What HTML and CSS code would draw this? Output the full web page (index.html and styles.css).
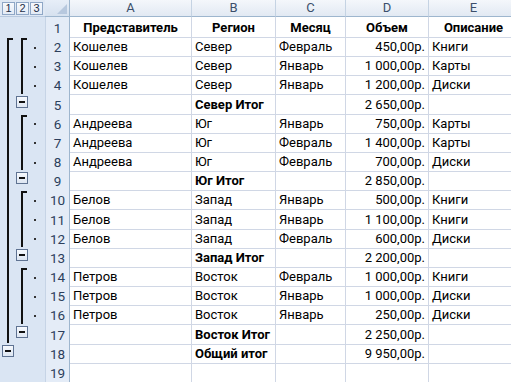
FILE: index.html
```html
<!DOCTYPE html>
<html lang="ru">
<head>
<meta charset="utf-8">
<title>Итоги</title>
<link rel="stylesheet" href="styles.css">
</head>
<body>
<div class="sheet">
  <div class="row head">
    <div class="lv-area"><span class="lv">1</span><span class="lv">2</span><span class="lv">3</span></div>
    <div class="corner"></div>
    <div class="ch">A</div><div class="ch">B</div><div class="ch">C</div><div class="ch">D</div><div class="ch">E</div>
  </div>

  <div class="row"><div class="o"></div><div class="o"></div><div class="o"></div><div class="rh">1</div>
    <div class="c b ctr">Представитель</div><div class="c b ctr">Регион</div><div class="c b ctr">Месяц</div><div class="c b ctr">Объем</div><div class="c b ctr">Описание</div></div>

  <div class="row"><div class="o o1 start"><i></i></div><div class="o o2 start"><i></i></div><div class="o dot"><i></i></div><div class="rh">2</div>
    <div class="c">Кошелев</div><div class="c">Север</div><div class="c">Февраль</div><div class="c num">450,00р.</div><div class="c">Книги</div></div>
  <div class="row"><div class="o o1 bar"><i></i></div><div class="o o2 bar"><i></i></div><div class="o dot"><i></i></div><div class="rh">3</div>
    <div class="c">Кошелев</div><div class="c">Север</div><div class="c">Январь</div><div class="c num">1 000,00р.</div><div class="c">Карты</div></div>
  <div class="row"><div class="o o1 bar"><i></i></div><div class="o o2 bar"><i></i></div><div class="o dot"><i></i></div><div class="rh">4</div>
    <div class="c">Кошелев</div><div class="c">Север</div><div class="c">Январь</div><div class="c num">1 200,00р.</div><div class="c">Диски</div></div>
  <div class="row"><div class="o o1 bar"><i></i></div><div class="o o2 btn"><i></i></div><div class="o"></div><div class="rh">5</div>
    <div class="c"></div><div class="c b">Север Итог</div><div class="c"></div><div class="c num">2 650,00р.</div><div class="c"></div></div>

  <div class="row"><div class="o o1 bar"><i></i></div><div class="o o2 start"><i></i></div><div class="o dot"><i></i></div><div class="rh">6</div>
    <div class="c">Андреева</div><div class="c">Юг</div><div class="c">Январь</div><div class="c num">750,00р.</div><div class="c">Карты</div></div>
  <div class="row"><div class="o o1 bar"><i></i></div><div class="o o2 bar"><i></i></div><div class="o dot"><i></i></div><div class="rh">7</div>
    <div class="c">Андреева</div><div class="c">Юг</div><div class="c">Февраль</div><div class="c num">1 400,00р.</div><div class="c">Карты</div></div>
  <div class="row"><div class="o o1 bar"><i></i></div><div class="o o2 bar"><i></i></div><div class="o dot"><i></i></div><div class="rh">8</div>
    <div class="c">Андреева</div><div class="c">Юг</div><div class="c">Февраль</div><div class="c num">700,00р.</div><div class="c">Диски</div></div>
  <div class="row"><div class="o o1 bar"><i></i></div><div class="o o2 btn"><i></i></div><div class="o"></div><div class="rh">9</div>
    <div class="c"></div><div class="c b">Юг Итог</div><div class="c"></div><div class="c num">2 850,00р.</div><div class="c"></div></div>

  <div class="row"><div class="o o1 bar"><i></i></div><div class="o o2 start"><i></i></div><div class="o dot"><i></i></div><div class="rh">10</div>
    <div class="c">Белов</div><div class="c">Запад</div><div class="c">Январь</div><div class="c num">500,00р.</div><div class="c">Книги</div></div>
  <div class="row"><div class="o o1 bar"><i></i></div><div class="o o2 bar"><i></i></div><div class="o dot"><i></i></div><div class="rh">11</div>
    <div class="c">Белов</div><div class="c">Запад</div><div class="c">Январь</div><div class="c num">1 100,00р.</div><div class="c">Книги</div></div>
  <div class="row"><div class="o o1 bar"><i></i></div><div class="o o2 bar"><i></i></div><div class="o dot"><i></i></div><div class="rh">12</div>
    <div class="c">Белов</div><div class="c">Запад</div><div class="c">Февраль</div><div class="c num">600,00р.</div><div class="c">Диски</div></div>
  <div class="row"><div class="o o1 bar"><i></i></div><div class="o o2 btn"><i></i></div><div class="o"></div><div class="rh">13</div>
    <div class="c"></div><div class="c b">Запад Итог</div><div class="c"></div><div class="c num">2 200,00р.</div><div class="c"></div></div>

  <div class="row"><div class="o o1 bar"><i></i></div><div class="o o2 start"><i></i></div><div class="o dot"><i></i></div><div class="rh">14</div>
    <div class="c">Петров</div><div class="c">Восток</div><div class="c">Февраль</div><div class="c num">1 000,00р.</div><div class="c">Книги</div></div>
  <div class="row"><div class="o o1 bar"><i></i></div><div class="o o2 bar"><i></i></div><div class="o dot"><i></i></div><div class="rh">15</div>
    <div class="c">Петров</div><div class="c">Восток</div><div class="c">Январь</div><div class="c num">1 000,00р.</div><div class="c">Диски</div></div>
  <div class="row"><div class="o o1 bar"><i></i></div><div class="o o2 bar"><i></i></div><div class="o dot"><i></i></div><div class="rh">16</div>
    <div class="c">Петров</div><div class="c">Восток</div><div class="c">Январь</div><div class="c num">250,00р.</div><div class="c">Диски</div></div>
  <div class="row"><div class="o o1 bar"><i></i></div><div class="o o2 btn"><i></i></div><div class="o"></div><div class="rh">17</div>
    <div class="c"></div><div class="c b">Восток Итог</div><div class="c"></div><div class="c num">2 250,00р.</div><div class="c"></div></div>

  <div class="row"><div class="o o1 btn"><i></i></div><div class="o"></div><div class="o"></div><div class="rh">18</div>
    <div class="c"></div><div class="c b">Общий итог</div><div class="c"></div><div class="c num">9 950,00р.</div><div class="c"></div></div>
  <div class="row"><div class="o"></div><div class="o"></div><div class="o"></div><div class="rh">19</div>
    <div class="c"></div><div class="c"></div><div class="c"></div><div class="c"></div><div class="c"></div></div>
  <div class="row"><div class="o"></div><div class="o"></div><div class="o"></div><div class="rh"></div>
    <div class="c"></div><div class="c"></div><div class="c"></div><div class="c"></div><div class="c"></div></div>
</div>
</body>
</html>
```

FILE: styles.css
```css
html, body {
  margin: 0;
  padding: 0;
  background: #ffffff;
}
body {
  width: 511px;
  height: 382px;
  overflow: hidden;
  font-family: Roboto, "Liberation Sans", sans-serif;
}
.sheet {
  display: flex;
  flex-direction: column;
}
.row {
  display: grid;
  grid-template-columns: 15px 15px 15px 25px 122px 84px 70px 83px 90px;
  height: 19.17px;
  flex: none;
}
.row.head {
  height: 17px;
  grid-template-columns: 45px 25px 122px 84px 70px 83px 90px;
}
/* outline level buttons area */
.lv-area {
  background: #dfe8f4;
  border-bottom: 1px solid #b7c9df;
  box-sizing: border-box;
  display: flex;
  align-items: center;
  gap: 1px;
  padding: 0 2px 0 2px;
}
.lv {
  width: 13px;
  height: 13px;
  box-sizing: border-box;
  border: 1px solid #8fa7c6;
  background: linear-gradient(#f7f9fd, #e3ebf6);
  font-size: 11px;
  line-height: 11px;
  text-align: center;
  color: #1e2f48;
  font-family: "Liberation Sans", sans-serif;
}
.corner {
  box-sizing: border-box;
  background: linear-gradient(#e7eef8, #d6e1ef);
  border-right: 1px solid #9eb6ce;
  border-bottom: 1px solid #9eb6ce;
  display: flex;
  align-items: flex-end;
  justify-content: flex-end;
  padding: 0 2px 2px 0;
}
.corner::after {
  content: "";
  width: 0;
  height: 0;
  border-left: 10px solid transparent;
  border-bottom: 10px solid #b7c8de;
}
.ch {
  box-sizing: border-box;
  background: linear-gradient(#f4f7fb, #e2e9f3);
  border-right: 1px solid #c5d3e3;
  border-bottom: 1px solid #9eb6ce;
  text-align: center;
  font-size: 13px;
  line-height: 16px;
  color: #3b4e6b;
}
/* outline column */
.o {
  background: #dae5f3;
  box-sizing: border-box;
  display: flex;
}
.o > i {
  display: block;
}
.o1.bar { padding-left: 7px; }
.o2.bar { padding-left: 6px; }
.bar > i {
  width: 2px;
  height: 100%;
  background: #111;
}
.o1.start { padding-left: 7px; }
.o2.start { padding-left: 6px; }
.start > i {
  margin-top: 2px;
  width: 6px;
  height: calc(100% - 2px);
  box-sizing: border-box;
  border-left: 2px solid #111;
  border-top: 2px solid #111;
}
.o1.btn { padding-left: 2px; }
.o2.btn { padding-left: 1px; }
.btn > i {
  margin-top: 2px;
  width: 12px;
  height: 12px;
  box-sizing: border-box;
  border: 1px solid #5f7392;
  background: linear-gradient(#f6f9fd, #dde6f2);
  display: flex;
  align-items: center;
  justify-content: center;
}
.btn > i::after {
  content: "";
  width: 6px;
  height: 2px;
  background: #111;
}
.dot {
  padding-left: 4px;
  padding-top: 2px;
  align-items: center;
}
.dot > i {
  width: 2px;
  height: 2px;
  background: #333;
}
/* row headers */
.rh {
  box-sizing: border-box;
  background: #e4ecf7;
  border-left: 1px solid #c6d4e6;
  border-right: 1px solid #9eb6ce;
  border-bottom: 1px solid #c5d3e6;
  text-align: center;
  font-size: 13.5px;
  line-height: 18px;
  padding-top: 2px;
  color: #2c3f5c;
}
/* cells */
.c {
  box-sizing: border-box;
  border-right: 1px solid #d0d7e5;
  border-bottom: 1px solid #d0d7e5;
  padding: 2px 3px 0 3px;
  font-size: 13px;
  line-height: 18px;
  white-space: nowrap;
  overflow: hidden;
  color: #000;
}
.b { font-weight: bold; }
.ctr { text-align: center; }
.num { text-align: right; }
```
